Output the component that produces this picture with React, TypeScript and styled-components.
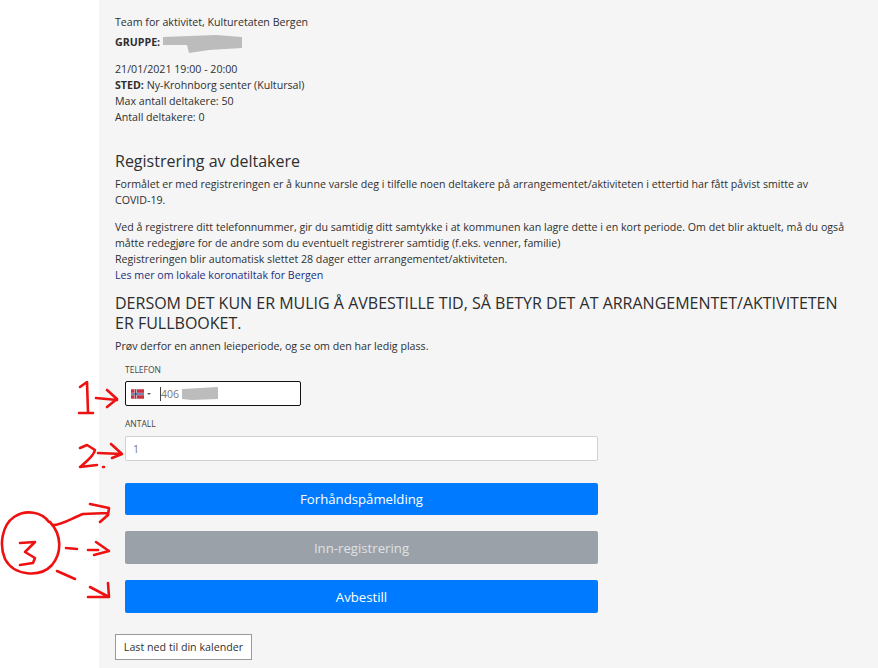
import React from 'react';
import styled, { createGlobalStyle } from 'styled-components';

const Global = createGlobalStyle`
  html, body { margin: 0; padding: 0; background: #fff; }
  body { font-family: "Open Sans", "Liberation Sans", sans-serif; color: #333; }
  #root { height: 668px; overflow: hidden; }
`;

const Page = styled.div`
  position: relative;
  width: 878px;
  height: 668px;
  overflow: hidden;
  background: #fff;
`;

const Panel = styled.main`
  margin-left: 99px;
  height: 668px;
  box-sizing: border-box;
  background: #f5f5f6;
  padding: 14px 16px 0;
  font-size: 10.65px;
  line-height: 16px;
  color: #2f2f2f;
`;

const Line = styled.p`
  margin: 0;
`;

const Block = styled.div<{ $mb?: number }>`
  margin-bottom: ${p => p.$mb ?? 0}px;
  max-width: 740px;
`;

const NoBreak = styled.span`
  white-space: nowrap;
`;

const Group = styled.p`
  margin: 4px 0 11px;
  height: 16px;
  display: flex;
  align-items: center;
  gap: 3px;
`;

const Heading = styled.h2`
  margin: 0 0 5px;
  font-size: 16px;
  line-height: 20px;
  font-weight: 400;
`;

const NoticeLink = styled.a`
  color: #1c2f7c;
  text-decoration: none;
`;

const Alert = styled.h3`
  margin: 10px 0 5px;
  width: 735px;
  font-size: 16px;
  line-height: 20px;
  font-weight: 400;
  color: #2c2c2c;
`;

const Form = styled.form`
  width: 483px;
  margin-top: 10px;
  padding-left: 10px;
  box-sizing: border-box;
`;

const Label = styled.label<{ $mb: number }>`
  display: block;
  font-size: 8.5px;
  line-height: 12px;
  color: #444;
  margin-bottom: ${p => p.$mb}px;
`;

const InputBox = styled.div<{ $focus?: boolean; $w: number; $pad: number; $mb: number }>`
  display: flex;
  align-items: center;
  width: ${p => p.$w}px;
  height: 25px;
  box-sizing: border-box;
  background: #fff;
  border: 1px solid ${p => (p.$focus ? '#111' : '#cfd2d5')};
  border-radius: 2px;
  margin-bottom: ${p => p.$mb}px;
  padding-left: ${p => p.$pad}px;
  font-size: 10.5px;
  color: #777;
`;

const Caret = styled.span`
  margin: 0 0 0 3px;
  border-top: 2px solid #555;
  border-left: 2px solid transparent;
  border-right: 2px solid transparent;
`;

const Cursor = styled.span`
  width: 1px;
  height: 14px;
  background: #444;
  margin-left: 9px;
`;

const Action = styled.button<{ $disabled?: boolean; $h: number }>`
  display: block;
  width: 473px;
  height: ${p => p.$h}px;
  margin: 0 0 16px;
  border: 0;
  border-radius: 2px;
  background: ${p => (p.$disabled ? '#9ba1a8' : '#007bff')};
  color: ${p => (p.$disabled ? '#dfe1e4' : '#fff')};
  font: 400 13.2px "Open Sans", sans-serif;
  padding: 0;
`;

const Calendar = styled.button`
  display: block;
  margin-top: 21px;
  height: 26px;
  width: 137px;
  box-sizing: border-box;
  padding: 0;
  background: #fff;
  border: 1px solid #9a9a9a;
  font: 400 10.7px "Open Sans", sans-serif;
  color: #333;
`;

const Blur = styled.svg`
  display: block;
  flex: none;
`;

const PhoneBlur = styled(Blur)`
  margin-left: 3px;
`;

const Marks = styled.svg`
  position: absolute;
  left: 0;
  top: 0;
  pointer-events: none;
`;

const Flag = () => (
  <svg width="13" height="10" viewBox="0 0 22 16">
    <rect width="22" height="16" fill="#c8333f" />
    <rect x="6" width="4" height="16" fill="#fff" />
    <rect y="6" width="22" height="4" fill="#fff" />
    <rect x="7" width="2" height="16" fill="#1f3a78" />
    <rect y="7" width="22" height="2" fill="#1f3a78" />
  </svg>
);

export default function App() {
  return (
    <Page>
      <Global />
      <Panel>
        <Line>Team for aktivitet, Kulturetaten Bergen</Line>
        <Group>
          <b>GRUPPE:</b>
          <Blur width="80" height="22" viewBox="0 0 80 22">
            <path d="M0 6 L53 4 L79 6 L79 17 L46 19 L26 22 L24 14 L0 14 Z" fill="#bcbcbc" />
          </Blur>
        </Group>
        <Block $mb={26}>
          <Line>21/01/2021 19:00 - 20:00</Line>
          <Line><b>STED:</b> Ny-Krohnborg senter (Kultursal)</Line>
          <Line>Max antall deltakere: 50</Line>
          <Line>Antall deltakere: 0</Line>
        </Block>
        <Heading>Registrering av deltakere</Heading>
        <Block $mb={11}>
          <Line>Formålet er med registreringen er å kunne varsle deg i tilfelle noen deltakere på arrangementet/aktiviteten i ettertid har fått påvist smitte av <NoBreak>COVID-19.</NoBreak></Line>
        </Block>
        <Block>
          <Line>Ved å registrere ditt telefonnummer, gir du samtidig ditt samtykke i at kommunen kan lagre dette i en kort periode. Om det blir aktuelt, må du også måtte redegjøre for de andre som du eventuelt registrerer samtidig (f.eks. venner, familie)</Line>
          <Line>Registreringen blir automatisk slettet 28 dager etter arrangementet/aktiviteten.</Line>
          <Line><NoticeLink href="#">Les mer om lokale koronatiltak for Bergen</NoticeLink></Line>
        </Block>
        <Alert>DERSOM DET KUN ER MULIG Å AVBESTILLE TID, SÅ BETYR DET AT ARRANGEMENTET/AKTIVITETEN ER FULLBOOKET.</Alert>
        <Line>Prøv derfor en annen leieperiode, og se om den har ledig plass.</Line>
        <Form>
          <Label $mb={5}>TELEFON</Label>
          <InputBox $focus $w={176} $pad={5} $mb={12}>
            <Flag />
            <Caret />
            <Cursor />
            406
            <PhoneBlur width="37" height="14" viewBox="0 0 37 14">
              <path d="M0 2 L36 0 L36 12 L10 13 L0 12 Z" fill="#bcbcbc" />
            </PhoneBlur>
          </InputBox>
          <Label $mb={6}>ANTALL</Label>
          <InputBox $w={473} $pad={7} $mb={22}>1</InputBox>
          <Action type="button" $h={32}>Forhåndspåmelding</Action>
          <Action type="button" $h={33} $disabled>Inn-registrering</Action>
          <Action type="button" $h={33}>Avbestill</Action>
        </Form>
        <Calendar type="button">Last ned til din kalender</Calendar>
      </Panel>
      <Marks width="878" height="668" viewBox="0 0 878 668" fill="none" stroke="#ee1111" strokeWidth="2.6" strokeLinecap="round" strokeLinejoin="round">
        <path d="M80 387 L87 382 L88 412 M79 413 L93 413" />
        <path d="M96 398 L117 400 M107 390 L117 399 L107 407" />
        <path d="M80 448 L87 445 L95 450 C94 456 86 462 80 467 L97 465 M103 467 L104 467" />
        <path d="M98 453 L122 454 M111 444 L122 454 L112 458" />
        <path d="M49 522 C42 512 26 509 14 517 C2 525 -1 545 5 559 C14 576 40 578 52 565 C62 553 62 535 50 522" />
        <path d="M20 543 L35 542 L25 552 L35 558 L33 563 L20 565" />
        <path d="M53 525 C62 525 72 518 83 514 L108 513 M90 504 L109 508 L108 515 L100 522" />
        <path d="M66 548 L77 549 M88 550 L98 550 M96 542 L109 551 L94 555" />
        <path d="M57 571 L75 579 M90 587 L109 597 M88 597 L109 597 M108 583 L109 597" />
      </Marks>
    </Page>
  );
}
